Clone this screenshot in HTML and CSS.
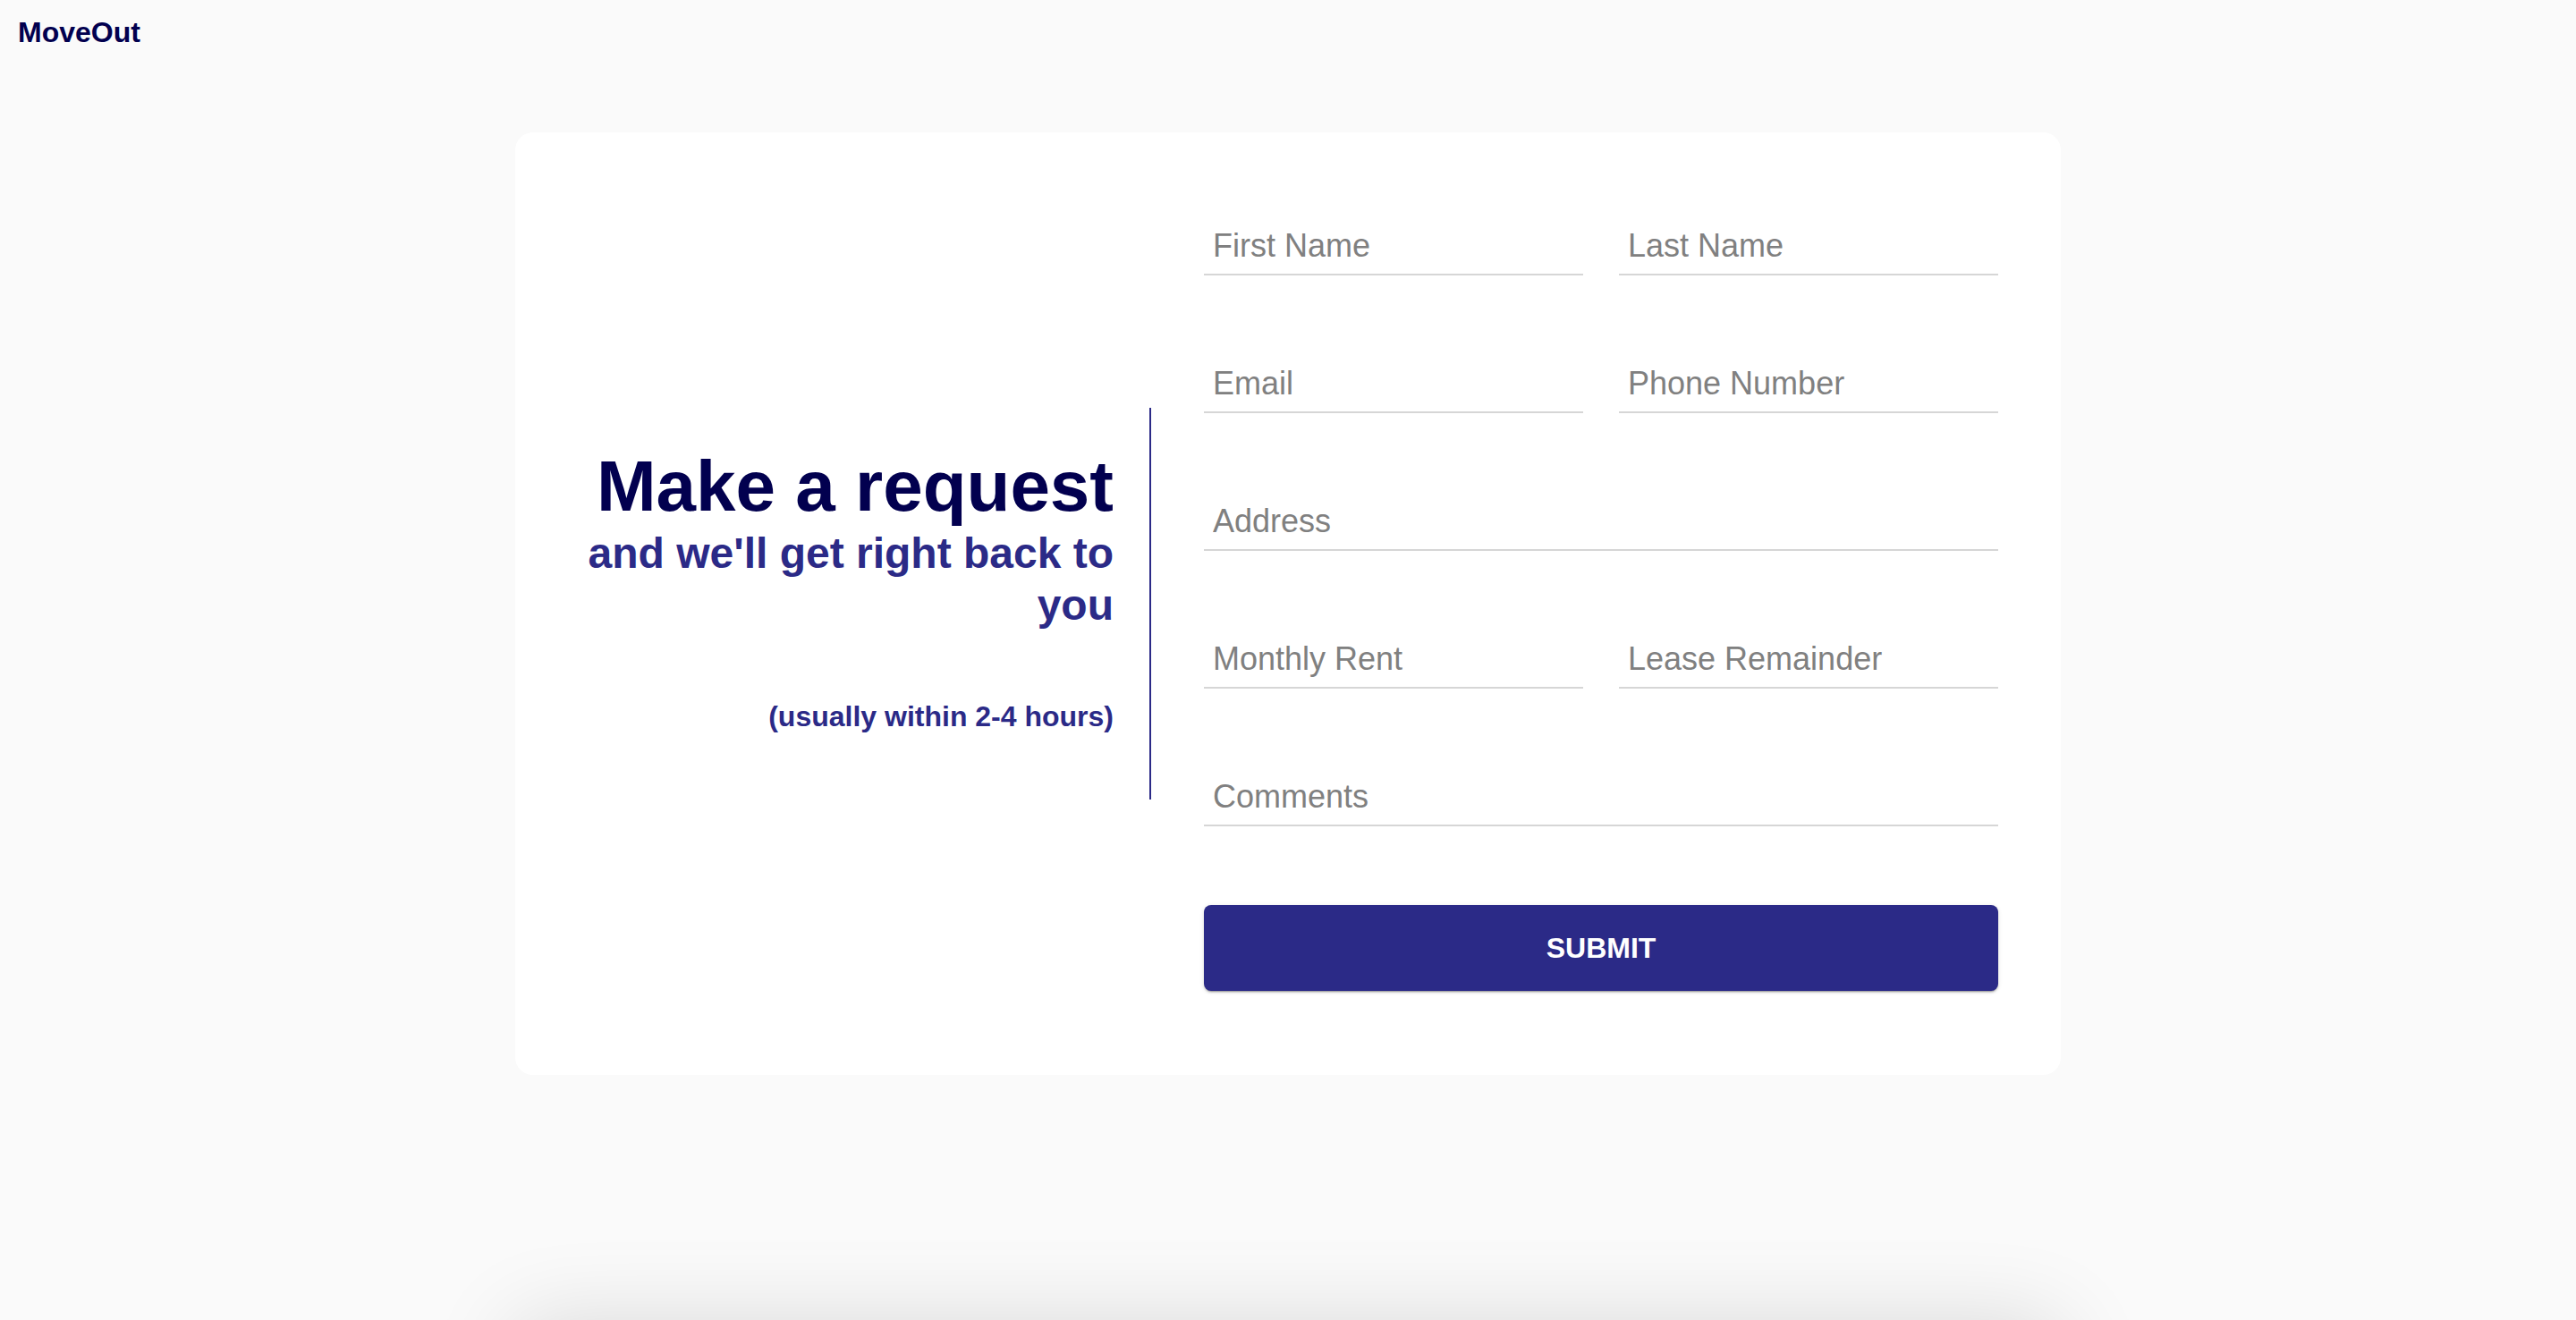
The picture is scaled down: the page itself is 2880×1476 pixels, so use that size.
FILE: index.html
```html
<!DOCTYPE html>
<html lang="en">
<head>
<meta charset="utf-8">
<title>MoveOut</title>
<link rel="stylesheet" href="styles.css">
</head>
<body>
<header class="header">
  <div class="logo">MoveOut</div>
</header>
<main class="main">
  <section class="card">
    <div class="intro">
      <h1 class="title">Make a request</h1>
      <h2 class="subtitle">and we'll get right back to you</h2>
      <p class="note">(usually within 2-4 hours)</p>
    </div>
    <div class="divider"></div>
    <form class="form">
      <input class="field" type="text" placeholder="First Name">
      <input class="field" type="text" placeholder="Last Name">
      <input class="field" type="email" placeholder="Email">
      <input class="field" type="tel" placeholder="Phone Number">
      <input class="field wide" type="text" placeholder="Address">
      <input class="field" type="text" placeholder="Monthly Rent">
      <input class="field" type="text" placeholder="Lease Remainder">
      <input class="field wide" type="text" placeholder="Comments">
      <button class="submit wide" type="button">SUBMIT</button>
    </form>
  </section>
  <section class="below"></section>
</main>
</body>
</html>
```

FILE: styles.css
```css
html, body {
  margin: 0;
  padding: 0;
}

body {
  background: #fafafa;
  font-family: "Liberation Sans", Arial, Helvetica, sans-serif;
}

.header {
  padding: 18px 20px 0;
}

.logo {
  font-size: 32px;
  line-height: 37px;
  font-weight: bold;
  color: #02004f;
}

.main {
  padding-top: 93px;
  padding-bottom: 200px;
}

.card {
  width: 1728px;
  box-sizing: border-box;
  margin: 0 auto;
  background: #ffffff;
  border-radius: 20px;
  padding: 94px 70px;
  display: flex;
  align-items: center;
}

.intro {
  flex: 1;
  min-width: 0;
  text-align: right;
  margin-right: 40px;
}

.title {
  margin: 0;
  font-size: 80px;
  line-height: 92px;
  font-weight: bold;
  color: #02004f;
}

.subtitle {
  margin: 0;
  font-size: 48px;
  line-height: 57.6px;
  font-weight: bold;
  color: #2b2a87;
}

.note {
  margin: 78px 0 32px;
  font-size: 32px;
  line-height: 37px;
  font-weight: bold;
  color: #2b2a87;
}

.divider {
  flex-shrink: 0;
  width: 2px;
  height: 438px;
  background: #2b2a87;
}

.form {
  flex-shrink: 0;
  width: 888px;
  margin-left: 59px;
  display: grid;
  grid-template-columns: 1fr 1fr;
  column-gap: 40px;
  row-gap: 88px;
}

.wide {
  grid-column: 1 / span 2;
}

.field {
  display: block;
  width: 100%;
  height: 66px;
  box-sizing: border-box;
  margin: 0;
  padding: 12px 10px 10px;
  border: none;
  border-bottom: 2px solid #d6d6d6;
  border-radius: 0;
  background: transparent;
  font-family: "Liberation Sans", Arial, Helvetica, sans-serif;
  font-size: 36px;
  line-height: 42px;
  color: #333333;
  outline: none;
}

.field::placeholder {
  color: #808080;
  opacity: 1;
}

.submit {
  height: 96px;
  border: none;
  border-radius: 8px;
  background: #2b2a87;
  color: #ffffff;
  font-family: "Liberation Sans", Arial, Helvetica, sans-serif;
  font-size: 32px;
  font-weight: bold;
  box-shadow: 0 3px 1px -2px rgba(0, 0, 0, 0.2), 0 2px 2px 0 rgba(0, 0, 0, 0.14), 0 1px 5px 0 rgba(0, 0, 0, 0.12);
  cursor: pointer;
}

.below {
  width: 1728px;
  height: 420px;
  margin: 278px auto 0;
  background: #fafafa;
  border-radius: 20px;
  box-shadow: 0 0 100px rgba(0, 0, 0, 0.14);
}
```
